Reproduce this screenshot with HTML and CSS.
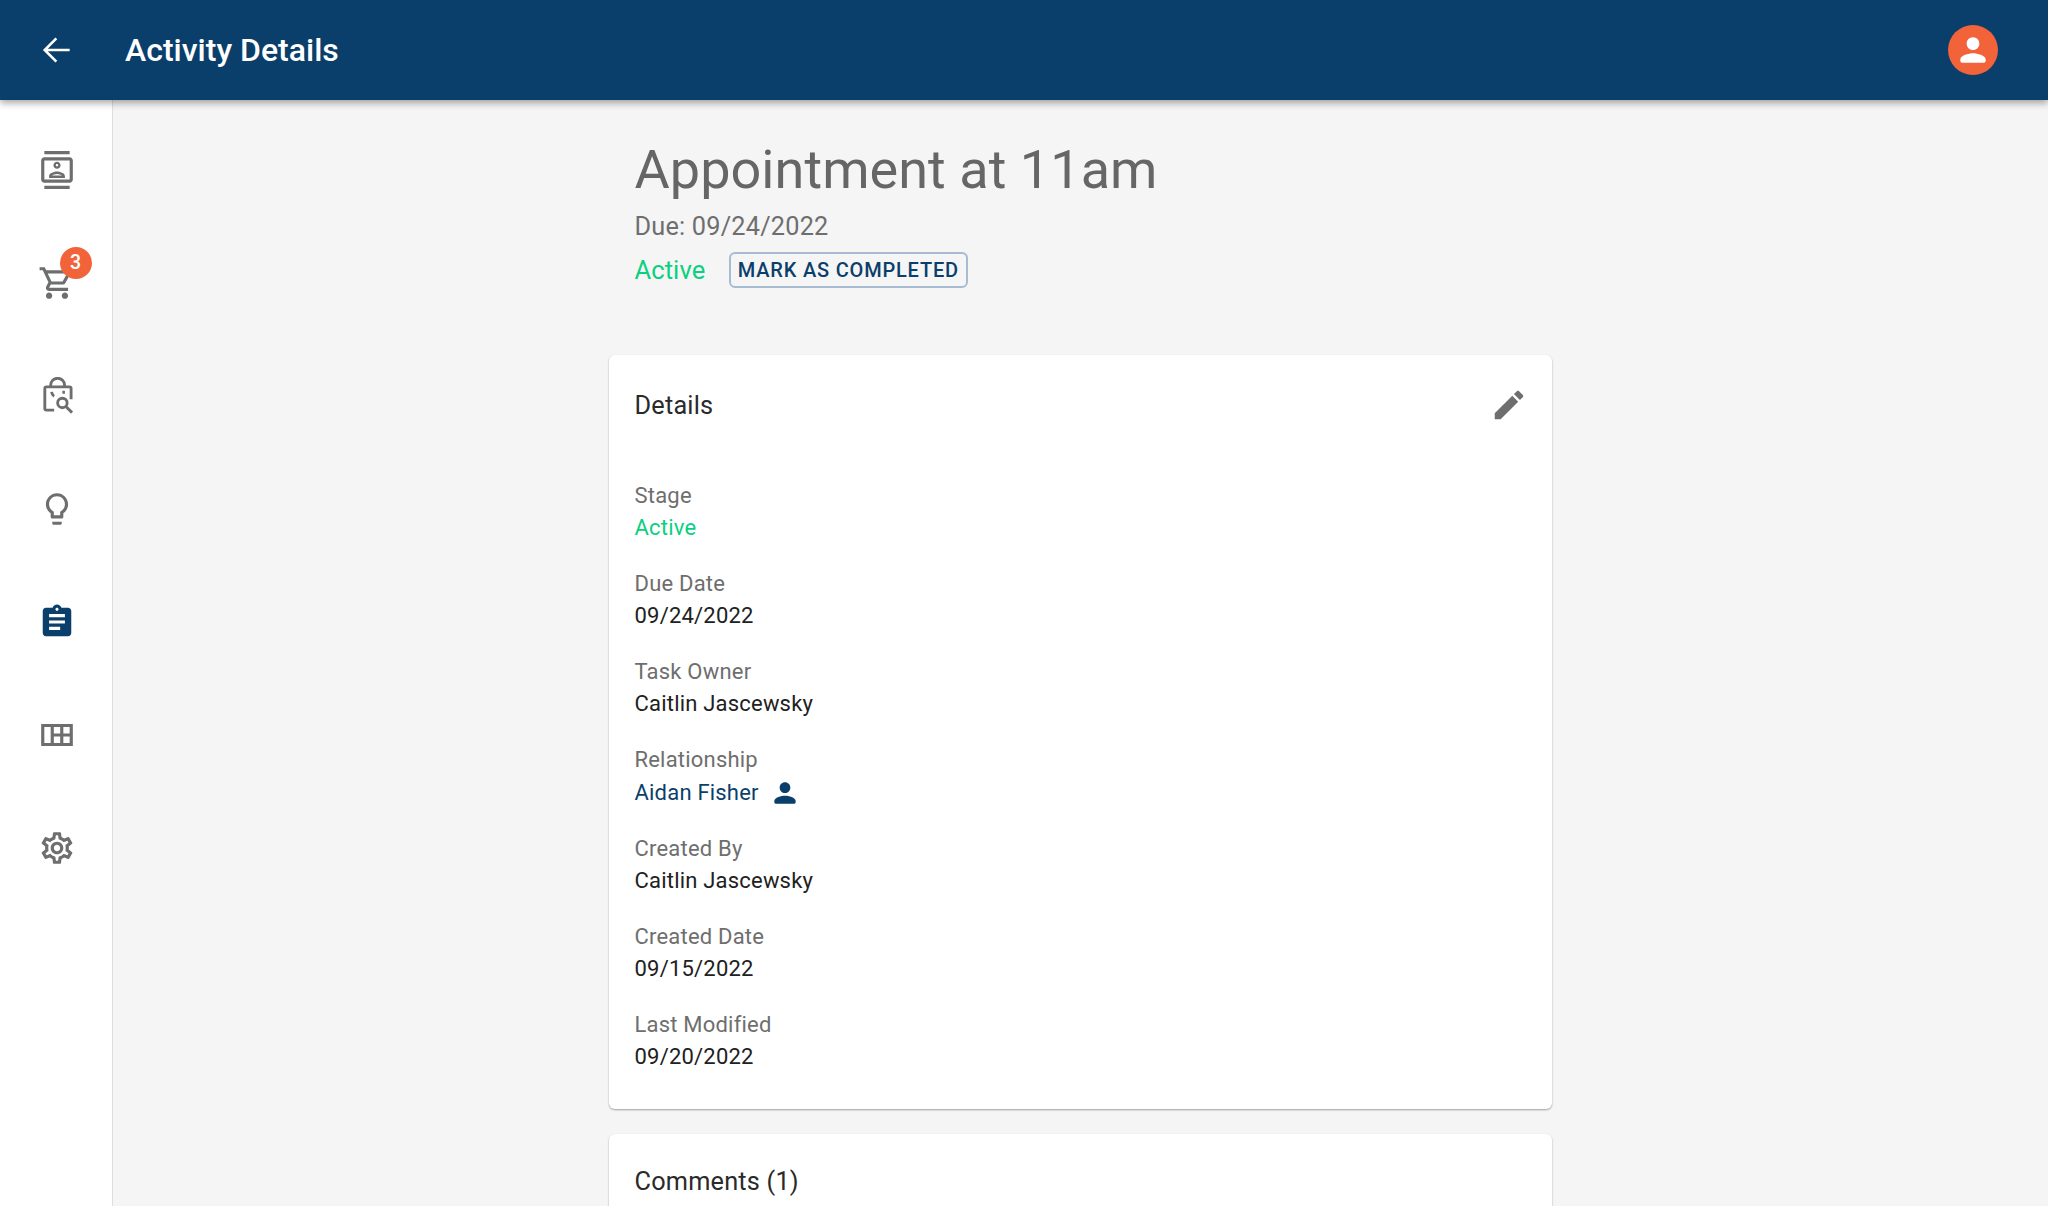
FILE: index.html
```html
<!DOCTYPE html>
<html lang="en">
<head>
<meta charset="utf-8">
<title>Activity Details</title>
<link rel="stylesheet" href="styles.css">
</head>
<body>
<header class="topbar">
  <svg class="top-back" viewBox="0 0 24 24"><path d="M20 12H4.6M11.6 4.6 4.2 12l7.4 7.4"/></svg>
  <h1 class="top-title">Activity Details</h1>
  <div class="avatar"><svg class="icon38" viewBox="0 0 24 24"><path fill="#fff" d="M12 12c2.21 0 4-1.79 4-4s-1.79-4-4-4-4 1.79-4 4 1.79 4 4 4zm0 2c-2.67 0-8 1.34-8 4v1c0 .55.45 1 1 1h14c.55 0 1-.45 1-1v-1c0-2.66-5.33-4-8-4z"/></svg></div>
</header>
<div class="shell">
  <nav class="rail">
    <div class="rail-item"><svg class="icon38" viewBox="0 0 24 24"><path d="M20 0H4v2h16V0zM4 24h16v-2H4v2zM20 4H4c-1.1 0-2 .9-2 2v12c0 1.1.9 2 2 2h16c1.1 0 2-.9 2-2V6c0-1.1-.9-2-2-2zm0 14H4V6h16v12zm-8-6.75c1.24 0 2.25-1.01 2.25-2.25S13.24 6.75 12 6.75 9.75 7.76 9.75 9s1.01 2.25 2.25 2.25zm0-3c.41 0 .75.34.75.75s-.34.75-.75.75-.75-.34-.75-.75.34-.75.75-.75zM17 15.99c0-2.09-3.31-2.99-5-2.99s-5 .9-5 2.99V17h10v-1.01zm-8.19-.49c.61-.52 2.03-1 3.19-1 1.17 0 2.59.48 3.2 1H8.81z"/></svg></div>
    <div class="rail-item"><span class="cart"><svg class="icon38" viewBox="0 0 24 24"><path d="M15.55 13c.75 0 1.41-.41 1.75-1.03l3.58-6.49c.37-.66-.11-1.48-.87-1.48H5.21l-.94-2H1v2h2l3.6 7.59-1.35 2.44C4.52 15.37 5.48 17 7 17h12v-2H7l1.1-2h7.45zM6.16 6h12.15l-2.76 5H8.53L6.16 6zM7 18c-1.1 0-1.99.9-1.99 2S5.9 22 7 22s2-.9 2-2-.9-2-2-2zm10 0c-1.1 0-1.99.9-1.99 2s.89 2 1.99 2 2-.9 2-2-.9-2-2-2z"/></svg><span class="badge">3</span></span></div>
    <div class="rail-item"><svg class="icon38" viewBox="0 0 24 24"><g class="line"><path d="M10.2 20.9H5.3a1 1 0 0 1-1-1V7.2a1 1 0 0 1 1-1h14.6a1 1 0 0 1 1 1v6.8"/><path d="M8 6.2V5.2a4.4 4.4 0 0 1 8.8 0v1"/><path d="M8.6 9.4c.1 1.2.7 2.2 1.6 2.7M15.4 9.6h1.6"/><circle cx="15.4" cy="16.4" r="3"/><path d="m17.6 18.6 3.9 3.9"/></g></svg></div>
    <div class="rail-item"><svg class="icon38" viewBox="0 0 24 24"><path d="M9 21c0 .55.45 1 1 1h4c.55 0 1-.45 1-1v-1H9v1zm3-19C8.14 2 5 5.14 5 9c0 2.38 1.19 4.47 3 5.74V17c0 .55.45 1 1 1h6c.55 0 1-.45 1-1v-2.26c1.81-1.27 3-3.36 3-5.74 0-3.86-3.14-7-7-7zm2.85 11.1l-.85.6V16h-4v-2.3l-.85-.6C7.8 12.16 7 10.63 7 9c0-2.76 2.24-5 5-5s5 2.24 5 5c0 1.63-.8 3.16-2.15 4.1z"/></svg></div>
    <div class="rail-item"><svg class="icon38 navy" viewBox="0 0 24 24"><path d="M19 3h-4.18C14.4 1.84 13.3 1 12 1c-1.3 0-2.4.84-2.82 2H5c-1.1 0-2 .9-2 2v14c0 1.1.9 2 2 2h14c1.1 0 2-.9 2-2V5c0-1.1-.9-2-2-2zm-7 0c.55 0 1 .45 1 1s-.45 1-1 1-1-.45-1-1 .45-1 1-1zm2 14H7v-2h7v2zm3-4H7v-2h10v2zm0-4H7V7h10v2z"/></svg></div>
    <div class="rail-item"><svg class="icon38" viewBox="0 0 24 24"><path fill-rule="evenodd" d="M2 5h20v14H2zM4 7v10h4V7zm6 0v4h4V7zm6 0v4h4V7zm-6 6v4h4v-4zm6 0v4h4v-4z"/></svg></div>
    <div class="rail-item"><svg class="icon38" viewBox="0 0 24 24"><path d="M19.43 12.98c.04-.32.07-.64.07-.98 0-.34-.03-.66-.07-.98l2.11-1.65c.19-.15.24-.42.12-.64l-2-3.46c-.09-.16-.26-.25-.44-.25-.06 0-.12.01-.17.03l-2.49 1c-.52-.4-1.08-.73-1.69-.98l-.38-2.65C14.46 2.18 14.25 2 14 2h-4c-.25 0-.46.18-.49.42l-.38 2.65c-.61.25-1.17.59-1.69.98l-2.49-1c-.06-.02-.12-.03-.18-.03-.17 0-.34.09-.43.25l-2 3.46c-.13.22-.07.49.12.64l2.11 1.65c-.04.32-.07.65-.07.98 0 .33.03.66.07.98l-2.11 1.65c-.19.15-.24.42-.12.64l2 3.46c.09.16.26.25.44.25.06 0 .12-.01.17-.03l2.49-1c.52.4 1.08.73 1.69.98l.38 2.65c.03.24.24.42.49.42h4c.25 0 .46-.18.49-.42l.38-2.65c.61-.25 1.17-.59 1.69-.98l2.49 1c.06.02.12.03.18.03.17 0 .34-.09.43-.25l2-3.46c.12-.22.07-.49-.12-.64l-2.11-1.65zm-1.98-1.71c.04.31.05.52.05.73 0 .21-.02.43-.05.73l-.14 1.13.89.7 1.08.84-.7 1.21-1.27-.51-1.04-.42-.9.68c-.43.32-.84.56-1.25.73l-1.06.43-.16 1.13-.2 1.35h-1.4l-.19-1.35-.16-1.13-1.06-.43c-.43-.18-.83-.41-1.23-.71l-.91-.7-1.06.43-1.27.51-.7-1.21 1.08-.84.89-.7-.14-1.13c-.03-.31-.05-.54-.05-.74s.02-.43.05-.73l.14-1.13-.89-.7-1.08-.84.7-1.21 1.27.51 1.04.42.9-.68c.43-.32.84-.56 1.25-.73l1.06-.43.16-1.13.2-1.35h1.39l.19 1.35.16 1.13 1.06.43c.43.18.83.41 1.23.71l.91.7 1.06-.43 1.27-.51.7 1.21-1.07.85-.89.7.14 1.13zM12 8c-2.21 0-4 1.79-4 4s1.79 4 4 4 4-1.79 4-4-1.79-4-4-4zm0 6c-1.1 0-2-.9-2-2s.9-2 2-2 2 .9 2 2-.9 2-2 2z"/></svg></div>
  </nav>
  <main class="content">
    <div class="column">
      <section class="heading">
        <h2 class="title">Appointment at 11am</h2>
        <div class="due">Due: 09/24/2022</div>
        <div class="status-row">
          <span class="status">Active</span>
          <button class="mark">MARK AS COMPLETED</button>
        </div>
      </section>
      <section class="card details">
        <div class="card-head">
          <h3 class="card-title">Details</h3>
          <svg class="icon38 edit" viewBox="0 0 24 24"><path d="M3 17.25V21h3.75L17.81 9.94l-3.75-3.75L3 17.25zM20.71 7.04c.39-.39.39-1.02 0-1.41l-2.34-2.34c-.39-.39-1.02-.39-1.41 0l-1.83 1.83 3.75 3.75 1.83-1.83z"/></svg>
        </div>
        <dl class="fields">
          <div class="field"><dt>Stage</dt><dd class="green">Active</dd></div>
          <div class="field"><dt>Due Date</dt><dd>09/24/2022</dd></div>
          <div class="field"><dt>Task Owner</dt><dd>Caitlin Jascewsky</dd></div>
          <div class="field rel"><dt>Relationship</dt><dd class="link">Aidan Fisher<svg class="icon32" viewBox="0 0 24 24"><path d="M12 12c2.21 0 4-1.79 4-4s-1.79-4-4-4-4 1.79-4 4 1.79 4 4 4zm0 2c-2.67 0-8 1.34-8 4v1c0 .55.45 1 1 1h14c.55 0 1-.45 1-1v-1c0-2.66-5.33-4-8-4z"/></svg></dd></div>
          <div class="field"><dt>Created By</dt><dd>Caitlin Jascewsky</dd></div>
          <div class="field"><dt>Created Date</dt><dd>09/15/2022</dd></div>
          <div class="field"><dt>Last Modified</dt><dd>09/20/2022</dd></div>
        </dl>
      </section>
      <section class="card comments">
        <h3 class="card-title">Comments (1)</h3>
      </section>
    </div>
  </main>
</div>
</body>
</html>
```
FILE: styles.css
```css
* { box-sizing: border-box; }
html, body { margin: 0; height: 100%; overflow: hidden; }
body { display: flex; flex-direction: column; font-family: Roboto, sans-serif; background: #f5f5f5; color: #212121; }
h1, h2, h3, dl, dd { margin: 0; font-weight: 400; }

.topbar { flex: none; height: 100px; background: #0b3f6b; display: flex; align-items: center; padding: 0 50px 0 38px; box-shadow: 0 3px 7px rgba(0,0,0,.35); position: relative; z-index: 2; }
.top-back { width: 38px; height: 38px; fill: none; stroke: #fff; stroke-width: 1.6; }
.top-title { margin-left: 49px; flex: 1; font-size: 32px; font-weight: 500; color: #fff; }
.avatar { width: 50px; height: 50px; border-radius: 50%; background: #f2633a; display: flex; align-items: center; justify-content: center; }

.icon38 { width: 38px; height: 38px; fill: #6e6e6e; display: block; }
.icon38.navy { fill: #0b3f6b; }
.line { fill: none; stroke: #6e6e6e; stroke-width: 1.8; }
.icon32 { width: 32px; height: 32px; fill: #0b3f6b; margin-left: 10px; flex: none; }

.shell { flex: 1; display: flex; min-height: 0; }
.rail { flex: none; width: 113px; background: #fff; border-right: 1px solid #dedede; padding: 13px 0 0 1px; display: flex; flex-direction: column; }
.rail-item { flex: none; height: 113px; display: flex; align-items: center; justify-content: center; }
.cart { position: relative; display: block; }
.badge { position: absolute; left: 22px; top: -17px; width: 32px; height: 32px; border-radius: 50%; background: #f2633a; color: #fff; font-size: 19.5px; font-weight: 500; display: flex; align-items: center; justify-content: center; }

.content { flex: 1; min-width: 0; overflow: hidden; }
.column { width: 943px; margin: 0 auto; }
.heading { padding: 38px 25.5px 0; height: 255px; }
.title { font-size: 54px; line-height: 64px; letter-spacing: .05px; color: #666; }
.due { font-size: 25.3px; line-height: 32px; letter-spacing: .2px; margin-top: 9px; color: #6e6e6e; }
.status-row { display: flex; align-items: center; margin-top: 9px; height: 36px; }
.status { font-size: 25.5px; letter-spacing: .1px; color: #0ad07f; }
.mark { margin-left: 23.5px; height: 36px; width: 239px; padding: 0; border: 2px solid #a7bcd0; border-radius: 6px; background: transparent; color: #0b3f6b; font: 500 20px Roboto, sans-serif; letter-spacing: .8px; }

.card { background: #fff; border-radius: 6px; box-shadow: 0 1px 2px rgba(0,0,0,.35); padding: 0 25.5px; }
.details { height: 754px; }
.card-head { display: flex; align-items: center; justify-content: space-between; height: 100px; margin-right: -1px; }
.card-title { font-size: 25.3px; letter-spacing: .2px; color: #2a2a2a; }
.fields { display: flex; flex-direction: column; padding-top: 25px; }
.field { height: 88px; }
.field.rel { height: 89px; }
.field.rel dd { padding-top: 1px; }
dt { font-size: 22px; line-height: 32px; letter-spacing: .2px; color: #6e6e6e; }
dd { font-size: 22px; line-height: 32px; letter-spacing: .2px; color: #212121; }
dd.green { color: #0ad07f; }
dd.link { color: #0b3f6b; display: flex; align-items: center; }
.comments { margin-top: 25px; height: 200px; padding-top: 33px; }
```
